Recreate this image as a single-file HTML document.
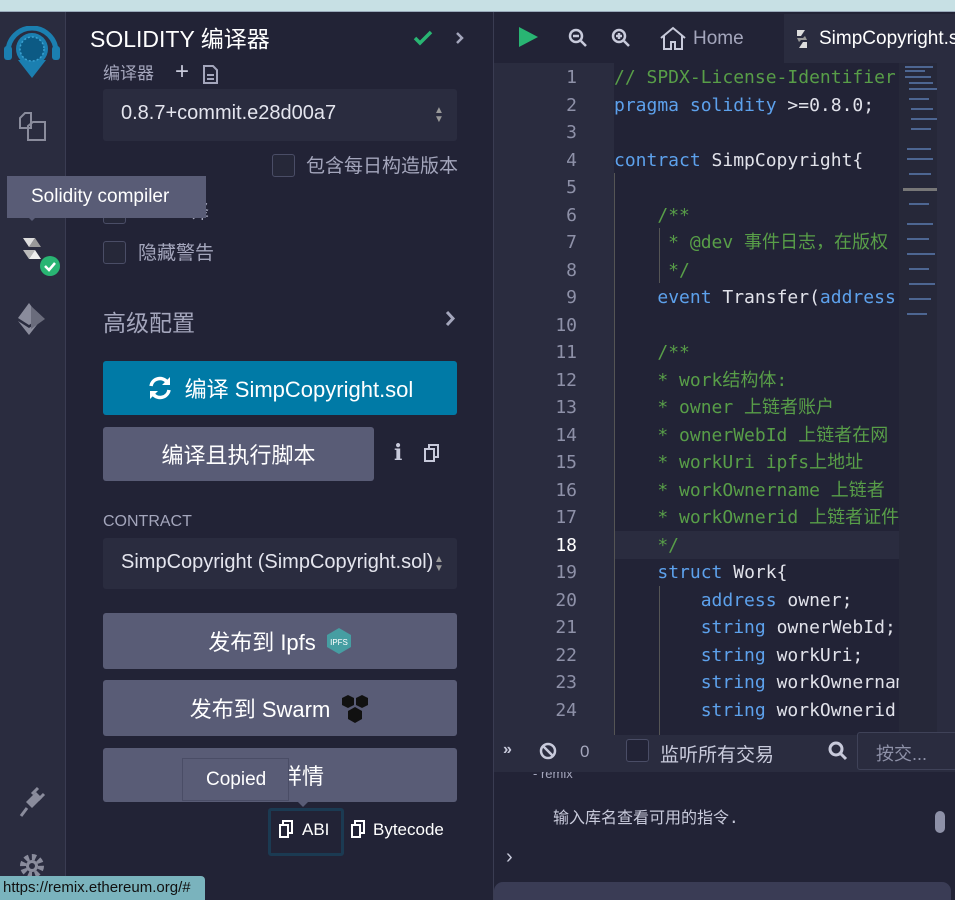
<!DOCTYPE html>
<html><head><meta charset="utf-8"><style>
*{box-sizing:border-box;margin:0;padding:0}
body{width:955px;height:900px;overflow:hidden;background:#222336;font-family:"Liberation Sans","Noto Sans CJK SC",sans-serif;color:#d8dae8;position:relative}
.a{position:absolute}
.mono{font-family:"DejaVu Sans Mono","Liberation Mono","Noto Sans CJK SC",monospace;font-size:18px}
.btn{position:absolute;background:#595c76;border-radius:3px;color:#fff;font-size:22px;display:flex;align-items:center;justify-content:center}
.cb{position:absolute;width:23px;height:23px;border:1px solid #4a4d66;border-radius:3px;background:#262839}
.ln{position:absolute;left:494px;width:83px;text-align:right;color:#8e91a8}
.cd{position:absolute;left:614px;white-space:pre;color:#e1e2ea}
.k{color:#5da1ec}.c{color:#589e48}
</style></head><body>
<div class="a" style="left:0;top:0;width:955px;height:12px;background:#c7e0e4;border-bottom:1px solid #9ab"></div>
<div class="a" style="left:0;top:12px;width:66px;height:888px;background:#2a2c3f;border-right:1px solid #3a3c52"></div>
<svg class="a" style="left:2px;top:26px" width="60" height="54" viewBox="0 0 60 54"><path d="M6 26a24 24 0 0 1 48 0" fill="none" stroke="#1b7fb0" stroke-width="5"/><rect x="2" y="20" width="8" height="14" rx="3" fill="#1b7fb0"/><rect x="50" y="20" width="8" height="14" rx="3" fill="#1b7fb0"/><circle cx="30" cy="23" r="16" fill="#1b7fb0"/><path d="M16 34h28L30 52z" fill="#1b7fb0"/><circle cx="30" cy="23" r="12" fill="#0c5a84" stroke="#3aa0d0" stroke-width="1.5" stroke-dasharray="2 2"/></svg>
<svg class="a" style="left:18px;top:112px" width="30" height="30" viewBox="0 0 30 30" fill="none" stroke="#8a8c9c" stroke-width="2"><path d="M2 16V6l5-5h6v15z"/><path d="M10 28V14l5-4h12v18z"/></svg>
<svg class="a" style="left:20px;top:236px" width="42" height="42" viewBox="0 0 42 42"><path d="M3 2h12l-6 9z" fill="#ddd"/><path d="M9 11l6-9 6 9z" fill="#999"/><path d="M3 14h12l-6 9z" fill="#bbb"/><path d="M9 23l6-9 6 9z" fill="#eee"/><circle cx="30" cy="30" r="10" fill="#29b573"/><path d="M25 30l4 4 6-7" stroke="#fff" stroke-width="2.5" fill="none"/></svg>
<svg class="a" style="left:17px;top:303px" width="32" height="32" viewBox="0 0 32 32"><path d="M12 0L1 15l11 7 11-7z" fill="#8a8c9c"/><path d="M1 18l11 14 11-14-11 7z" fill="#8a8c9c"/><path d="M14 3l14 13-14 10z" fill="#6a6c7c"/></svg>
<svg class="a" style="left:18px;top:786px" width="30" height="32" viewBox="0 0 30 32"><path d="M8 16l10-10 6 6-10 10z" fill="#8a8c9c"/><path d="M14 8l6-6M20 14l6-6" stroke="#8a8c9c" stroke-width="3"/><path d="M9 22l-6 8" stroke="#8a8c9c" stroke-width="3"/></svg>
<svg class="a" style="left:18px;top:852px" width="28" height="28" viewBox="0 0 28 28"><circle cx="14" cy="14" r="9" fill="none" stroke="#8a8c9c" stroke-width="6" stroke-dasharray="4 3"/><circle cx="14" cy="14" r="6" fill="#8a8c9c"/><circle cx="14" cy="14" r="3" fill="#2a2c3f"/></svg>
<div class="a" style="left:67px;top:12px;width:427px;height:888px;background:#222336;border-right:1px solid #3a3c52"></div>
<div class="a" style="left:90px;top:25px;font-size:23px;color:#fff;line-height:28px">SOLIDITY 编译器</div>
<svg class="a" style="left:413px;top:30px" width="20" height="16" viewBox="0 0 20 16"><path d="M2 8l5 5 11-11" stroke="#29b573" stroke-width="3.5" fill="none"/></svg>
<svg class="a" style="left:455px;top:31px" width="10" height="14" viewBox="0 0 10 14"><path d="M2 2l5 5-5 5" stroke="#a4a6bc" stroke-width="2.5" fill="none"/></svg>
<div class="a" style="left:103px;top:63px;font-size:17px;color:#a4a6bc;line-height:22px">编译器</div>
<div class="a" style="left:175px;top:58px;font-size:24px;color:#c8cadb;line-height:28px">+</div>
<svg class="a" style="left:203px;top:65px" width="15" height="19" viewBox="0 0 15 19" fill="none" stroke="#a4a6bc" stroke-width="2"><path d="M1 1h9l4 4v13H1z"/><path d="M4 10h7M4 14h7"/></svg>
<div class="a" style="left:103px;top:89px;width:354px;height:52px;background:#2a2c3f;border-radius:3px"></div>
<div class="a" style="left:121px;top:102px;font-size:20px;color:#e4e5ee">0.8.7+commit.e28d00a7</div>
<div class="a" style="left:434px;top:106px;font-size:10px;color:#999;line-height:9px">▲<br>▼</div>
<div class="cb" style="left:272px;top:154px"></div>
<div class="a" style="left:306px;top:151px;font-size:19px;color:#a4a6bc">包含每日构造版本</div>
<div class="cb" style="left:103px;top:201px"></div>
<div class="a" style="left:190px;top:197px;font-size:19px;color:#a4a6bc">译</div>
<div class="cb" style="left:103px;top:241px"></div>
<div class="a" style="left:138px;top:238px;font-size:19px;color:#a4a6bc">隐藏警告</div>
<div class="a" style="left:7px;top:176px;width:199px;height:42px;background:#595c76"></div>
<div class="a" style="left:26px;top:215px;width:0;height:0;border:6px solid transparent;border-top-color:#595c76"></div>
<div class="a" style="left:31px;top:186px;font-size:19px;color:#fff">Solidity compiler</div>
<div class="a" style="left:103px;top:304px;font-size:23px;color:#a4a6bc">高级配置</div>
<svg class="a" style="left:445px;top:310px" width="12" height="17" viewBox="0 0 12 17"><path d="M2 2l6 6.5-6 6.5" stroke="#a4a6bc" stroke-width="3" fill="none"/></svg>
<div class="btn" style="left:103px;top:361px;width:354px;height:54px;background:#007aa6">
<svg width="26" height="26" viewBox="0 0 26 26" style="margin-right:12px"><path d="M4 11a9 9 0 0 1 16-4M22 15a9 9 0 0 1-16 4" stroke="#fff" stroke-width="3.5" fill="none"/><path d="M23 2v8h-8z M3 24v-8h8z" fill="#fff"/></svg>编译 SimpCopyright.sol</div>
<div class="btn" style="left:103px;top:427px;width:271px;height:54px">编译且执行脚本</div>
<div class="a" style="left:394px;top:440px;font-size:22px;color:#c8cadb;font-weight:bold;font-family:'DejaVu Serif',serif">i</div>
<svg class="a" style="left:424px;top:444px" width="16" height="18" viewBox="0 0 16 18" fill="none" stroke="#c8cadb" stroke-width="2"><rect x="1" y="5" width="9" height="12"/><path d="M5 5V1h9v12h-4"/></svg>
<div class="a" style="left:103px;top:513px;font-size:16px;color:#a4a6bc">CONTRACT</div>
<div class="a" style="left:103px;top:538px;width:354px;height:51px;background:#2a2c3f;border-radius:3px"></div>
<div class="a" style="left:121px;top:551px;font-size:20px;color:#e4e5ee;width:313px;overflow:hidden;white-space:nowrap">SimpCopyright (SimpCopyright.sol)</div>
<div class="a" style="left:434px;top:555px;font-size:10px;color:#999;line-height:9px">▲<br>▼</div>
<div class="btn" style="left:103px;top:613px;width:354px;height:56px">发布到 Ipfs <svg width="26" height="28" viewBox="0 0 26 28" style="margin-left:10px"><path d="M13 1l12 7v12l-12 7-12-7V8z" fill="#469ea2"/><text x="13" y="18" font-size="8" fill="#fff" text-anchor="middle" font-family="Liberation Sans">IPFS</text></svg></div>
<div class="btn" style="left:103px;top:680px;width:354px;height:56px">发布到 Swarm <svg width="30" height="30" viewBox="0 0 30 30" style="margin-left:10px"><path d="M15 14l7 4v8l-7 4-7-4v-8z" fill="#111"/><path d="M8 2l6 3v7l-6 3-6-3V5z" fill="#111"/><path d="M22 2l6 3v7l-6 3-6-3V5z" fill="#111"/></svg></div>
<div class="btn" style="left:103px;top:748px;width:354px;height:54px">编译详情</div>
<div class="a" style="left:182px;top:758px;width:107px;height:43px;background:#595c76;border:1px solid #4a4d66"></div>
<div class="a" style="left:206px;top:769px;font-size:19px;color:#fff">Copied</div>
<div class="a" style="left:297px;top:801px;width:0;height:0;border:6px solid transparent;border-top-color:#595c76"></div>
<div class="a" style="left:268px;top:808px;width:76px;height:48px;border:3px solid #1b3a52;border-radius:3px"></div>
<svg class="a" style="left:279px;top:820px" width="14" height="18" viewBox="0 0 14 18" fill="none" stroke="#fff" stroke-width="2"><rect x="1" y="5" width="8" height="12"/><path d="M4 5V1h9v12h-4"/></svg>
<div class="a" style="left:302px;top:820px;font-size:17px;color:#fff">ABI</div>
<svg class="a" style="left:351px;top:820px" width="14" height="18" viewBox="0 0 14 18" fill="none" stroke="#fff" stroke-width="2"><rect x="1" y="5" width="8" height="12"/><path d="M4 5V1h9v12h-4"/></svg>
<div class="a" style="left:373px;top:820px;font-size:17px;color:#fff">Bytecode</div>
<div class="a" style="left:0;top:876px;width:205px;height:24px;background:#7ab3bd;border-radius:0 4px 0 0;color:#111;font-size:15px;padding:3px 3px">https://remix.ethereum.org/#</div>
<div class="a" style="left:495px;top:12px;width:460px;height:51px;background:#222336"></div>
<svg class="a" style="left:517px;top:25px" width="22" height="24" viewBox="0 0 22 24"><path d="M2 2l19 10L2 22z" fill="#29b573"/></svg>
<svg class="a" style="left:568px;top:28px" width="20" height="20" viewBox="0 0 20 20" fill="none" stroke="#c8cadb" stroke-width="2.5"><circle cx="8" cy="8" r="6"/><path d="M13 13l5 5M5 8h6"/></svg>
<svg class="a" style="left:611px;top:28px" width="20" height="20" viewBox="0 0 20 20" fill="none" stroke="#c8cadb" stroke-width="2.5"><circle cx="8" cy="8" r="6"/><path d="M13 13l5 5M5 8h6M8 5v6"/></svg>
<svg class="a" style="left:660px;top:26px" width="26" height="24" viewBox="0 0 26 24" fill="none" stroke="#c8cadb" stroke-width="2"><path d="M1 12L13 2l12 10M4 10v13h7v-7h4v7h7V10"/></svg>
<div class="a" style="left:693px;top:28px;font-size:19px;color:#a4a6bc">Home</div>
<div class="a" style="left:784px;top:14px;width:171px;height:49px;background:#2a2c3f"></div>
<svg class="a" style="left:795px;top:29px" width="14" height="20" viewBox="0 0 14 20"><path d="M2 1h8L6 7H2z" fill="#ddd"/><path d="M12 19H4l4-6h4z" fill="#ddd"/><path d="M2 9h6l-4 4z M12 11H6l4-4z" fill="#999"/></svg>
<div class="a" style="left:819px;top:28px;font-size:19px;color:#fff;white-space:nowrap">SimpCopyright.sol</div>
<div class="a" style="left:494px;top:63px;width:120px;height:672px;background:#2a2c3f"></div>
<div class="a" style="left:614px;top:531px;width:285px;height:28px;background:#2a2c3f"></div>
<div class="a" style="left:614px;top:173px;width:1px;height:562px;background:#555"></div>
<div class="a" style="left:659px;top:228px;width:1px;height:55px;background:#555"></div>
<div class="a" style="left:659px;top:586px;width:1px;height:149px;background:#555"></div>
<div class="ln mono" style="top:64px;line-height:27.5px">1<br>2<br>3<br>4<br>5<br>6<br>7<br>8<br>9<br>10<br>11<br>12<br>13<br>14<br>15<br>16<br>17<br><span style="color:#fff">18</span><br>19<br>20<br>21<br>22<br>23<br>24</div>
<div class="cd mono" style="top:64px;line-height:27.5px;width:285px;overflow:hidden"><span class="c">// SPDX-License-Identifier: MIT</span>
<span class="k">pragma solidity</span> &gt;=0.8.0;

<span class="k">contract</span> SimpCopyright{

    <span class="c">/**</span>
<span class="c">     * @dev 事件日志，在版权</span>
<span class="c">     */</span>
    <span class="k">event</span> Transfer(<span class="k">address</span>

    <span class="c">/**</span>
<span class="c">    * work结构体:</span>
<span class="c">    * owner 上链者账户</span>
<span class="c">    * ownerWebId 上链者在网</span>
<span class="c">    * workUri ipfs上地址</span>
<span class="c">    * workOwnername 上链者</span>
<span class="c">    * workOwnerid 上链者证件</span>
<span class="c">    */</span>
    <span class="k">struct</span> Work{
        <span class="k">address</span> owner;
        <span class="k">string</span> ownerWebId;
        <span class="k">string</span> workUri;
        <span class="k">string</span> workOwnername;
        <span class="k">string</span> workOwnerid;</div>
<div class="a" style="left:899px;top:63px;width:38px;height:672px;background:#262839"></div>
<svg class="a" style="left:903px;top:64px" width="34" height="260" viewBox="0 0 34 260"><g stroke="#5a7ab0" stroke-width="1.5"><path d="M2 3h28M2 7h20M2 13h26M6 19h24M6 25h28M6 35h20M8 45h22M8 55h26M8 65h20M4 85h24M4 95h26M6 110h22M6 125h28M6 140h20M4 160h26M4 175h22M4 190h28M6 205h20M6 220h26M6 235h22M4 250h20"/></g><rect x="0" y="124" width="34" height="3" fill="#777"/></svg>
<div class="a" style="left:937px;top:63px;width:18px;height:672px;background:#2a2c3f"></div>
<div class="a" style="left:494px;top:735px;width:461px;height:37px;background:#2a2c3f"></div>
<div class="a" style="left:503px;top:741px;font-size:16px;color:#c8cadb;font-weight:bold">»</div>
<svg class="a" style="left:539px;top:742px" width="18" height="18" viewBox="0 0 18 18" fill="none" stroke="#c8cadb" stroke-width="2.5"><circle cx="9" cy="9" r="7"/><path d="M4 4l10 10"/></svg>
<div class="a" style="left:580px;top:742px;font-size:17px;color:#a4a6bc">0</div>
<div class="cb" style="left:626px;top:739px;background:#222336"></div>
<div class="a" style="left:660px;top:740px;font-size:19px;color:#c8cadb">监听所有交易</div>
<svg class="a" style="left:828px;top:741px" width="20" height="20" viewBox="0 0 20 20" fill="none" stroke="#c8cadb" stroke-width="3"><circle cx="8" cy="8" r="6"/><path d="M12 12l6 6"/></svg>
<div class="a" style="left:857px;top:732px;width:100px;height:38px;background:#2a2c3f;border:1px solid #3f4258;border-radius:3px"></div>
<div class="a" style="left:876px;top:740px;font-size:18px;color:#8e91a8">按交...</div>
<div class="a" style="left:533px;top:772px;font-size:13px;color:#a4a6bc;height:8px;overflow:hidden;line-height:4px">- remix</div>
<div class="a" style="left:553px;top:804px;font-size:16px;color:#c8cadb;font-family:'DejaVu Sans Mono','Noto Sans CJK SC',monospace">输入库名查看可用的指令.</div>
<div class="a" style="left:935px;top:811px;width:10px;height:22px;background:#8e91a8;border-radius:5px"></div>
<div class="a" style="left:506px;top:846px;font-size:20px;color:#c8cadb">›</div>
<div class="a" style="left:494px;top:882px;width:457px;height:18px;background:#3a3c55;border-radius:9px 9px 0 0"></div>
</body></html>
